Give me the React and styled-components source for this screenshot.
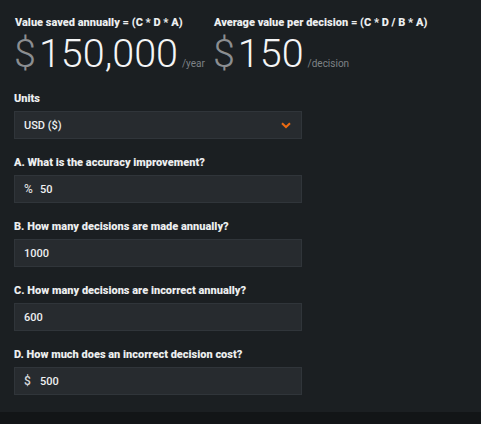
import React from "react";
import styled, { createGlobalStyle } from "styled-components";

const Global = createGlobalStyle`
  html, body { margin: 0; padding: 0; background: #121517; }
  body { font-family: Roboto, "Liberation Sans", Arial, sans-serif; }
`;

const Panel = styled.div`
  width: 481px;
  height: 412px;
  background: #1b1f22;
  box-sizing: border-box;
  padding: 16px 14px 0 14px;
`;

const Stats = styled.div`
  display: flex;
  gap: 8px;
`;

const Stat = styled.div`
  display: flex;
  flex-direction: column;
`;

const StatLabel = styled.div`
  font-size: 11px;
  font-weight: 900;
  color: #eceeef;
  line-height: 14px;
  padding-left: 1px;
`;

const StatValue = styled.div`
  display: flex;
  align-items: baseline;
  height: 48px;
`;

const Currency = styled.span`
  font-size: 39.5px;
  font-weight: 300;
  color: #8b8e91;
  line-height: 48px;
  margin-right: 3px;
`;

const Amount = styled.span`
  font-size: 39.5px;
  font-weight: 300;
  color: #f4f5f6;
  line-height: 48px;
`;

const Unit = styled.span`
  font-size: 10px;
  color: #7e8286;
  margin-left: 4px;
`;

const Form = styled.div`
  display: flex;
  flex-direction: column;
  gap: 17px;
  margin-top: 14px;
`;

const Field = styled.div`
  display: flex;
  flex-direction: column;
  gap: 5px;
`;

const Label = styled.div`
  font-size: 11px;
  font-weight: 900;
  color: #eceeef;
  line-height: 14px;
`;

const Box = styled.div`
  width: 288px;
  height: 28px;
  box-sizing: border-box;
  background: #272b2f;
  border: 1px solid #30353a;
  display: flex;
  align-items: center;
  padding: 0 9px;
  font-size: 11px;
  font-weight: 500;
  color: #eef0f1;
  gap: 8px;
`;

const Prefix = styled.span`
  color: #d8dadc;
  font-size: 12px;
  width: 8px;
`;

const Value = styled.span`
  flex: 1;
`;

const Chevron = () => (
  <svg width="10" height="7" viewBox="0 0 10 7" style={{ marginRight: 1 }}>
    <path d="M1 1.2 L5 5 L9 1.2" fill="none" stroke="#ec6a12" strokeWidth="2" />
  </svg>
);

const fields = [
  { label: "A. What is the accuracy improvement?", prefix: "%", value: "50" },
  { label: "B. How many decisions are made annually?", value: "1000" },
  { label: "C. How many decisions are incorrect annually?", value: "600" },
  { label: "D. How much does an incorrect decision cost?", prefix: "$", value: "500" },
];

export default function App() {
  return (
    <>
      <Global />
      <Panel>
        <Stats>
          <Stat>
            <StatLabel>Value saved annually = (C * D * A)</StatLabel>
            <StatValue>
              <Currency>$</Currency>
              <Amount>150,000</Amount>
              <Unit>/year</Unit>
            </StatValue>
          </Stat>
          <Stat>
            <StatLabel>Average value per decision = (C * D / B * A)</StatLabel>
            <StatValue>
              <Currency>$</Currency>
              <Amount>150</Amount>
              <Unit>/decision</Unit>
            </StatValue>
          </Stat>
        </Stats>
        <Form>
          <Field>
            <Label>Units</Label>
            <Box>
              <Value>USD ($)</Value>
              <Chevron />
            </Box>
          </Field>
          {fields.map((f) => (
            <Field key={f.label}>
              <Label>{f.label}</Label>
              <Box>
                {f.prefix && <Prefix>{f.prefix}</Prefix>}
                <Value>{f.value}</Value>
              </Box>
            </Field>
          ))}
        </Form>
      </Panel>
    </>
  );
}
